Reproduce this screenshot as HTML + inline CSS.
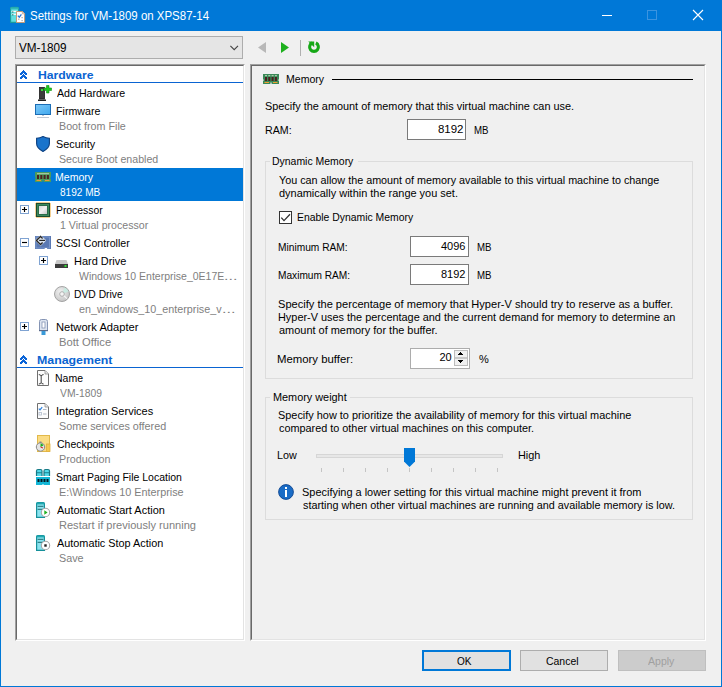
<!DOCTYPE html>
<html><head><meta charset="utf-8"><title>Settings for VM-1809 on XPS87-14</title>
<style>
html,body{margin:0;padding:0}
body{width:722px;height:687px;overflow:hidden;position:relative;background:#f0f0f0;font-family:"Liberation Sans",sans-serif;font-size:11px;line-height:13px;color:#000}
.a{position:absolute}
.t{position:absolute;white-space:pre;line-height:13px;font-size:11px;transform-origin:0 0}
svg{position:absolute;overflow:visible}
.sunken{position:absolute;box-sizing:border-box;border-top:1px solid #a0a0a0;border-left:1px solid #a0a0a0;border-right:1px solid #fff;border-bottom:1px solid #fff}
.sunken>.in{position:absolute;left:0;top:0;right:0;bottom:0;border-top:1px solid #696969;border-left:1px solid #696969;border-right:1px solid #e3e3e3;border-bottom:1px solid #e3e3e3}
.tb{position:absolute;box-sizing:border-box;background:#fff;border:1px solid #7a7a7a}
.grp{position:absolute;box-sizing:border-box;border:1px solid #dcdcdc}
.btn{position:absolute;box-sizing:border-box;background:#e1e1e1;border:1px solid #adadad}
.pm{position:absolute;box-sizing:border-box;width:9px;height:9px;border:1px solid #7fa3d2;background:#fff}
</style></head><body>
<!-- window frame -->
<div class="a" style="left:0;top:0;width:722px;height:31px;background:#0078d7"></div>
<div class="a" style="left:0;top:0;width:1px;height:687px;background:#0078d7"></div>
<div class="a" style="left:721px;top:0;width:1px;height:687px;background:#0078d7"></div>
<div class="a" style="left:0;top:686px;width:722px;height:1px;background:#0078d7"></div>
<!-- title icon -->
<svg style="left:10px;top:7px" width="16" height="16" viewBox="0 0 16 16">
 <path d="M0.6 15.4V1.6Q0.6 0.4 2 0.4H7.2Q8.5 0.4 8.5 1.6V15.4z" fill="#5fe0e0" stroke="#1a9c9c" stroke-width="1.1"/>
 <rect x="0.6" y="0.4" width="7.9" height="2" fill="#30b8b8"/>
 <rect x="1.5" y="3.8" width="6" height="1.3" fill="#f4ffff"/>
 <rect x="1.5" y="6.6" width="6" height="1.3" fill="#f4ffff"/>
 <rect x="2.3" y="4.4" width="1" height="1.2" fill="#0a4a4a"/><rect x="2.3" y="7.2" width="1" height="1.2" fill="#0a4a4a"/>
 <path d="M6.5 4.5H12.5L14.6 6.6V15.5H6.5z" fill="#fff" stroke="#c49a78" stroke-width="1"/>
 <path d="M12.3 4.5V6.8H14.6" fill="#e8e0d8" stroke="#c49a78" stroke-width="0.7"/>
 <path d="M7.8 8.6L9.3 10.2L11.4 7.4" fill="none" stroke="#2a78d8" stroke-width="1.3"/>
 <rect x="8" y="11.5" width="1.5" height="1.5" fill="#c8c0b8"/><rect x="11.5" y="10" width="1.2" height="1.2" fill="#a0a0a0"/><rect x="11.5" y="13" width="1.2" height="1.2" fill="#a0a0a0"/>
</svg>
<!-- title buttons -->
<div class="a" style="left:602px;top:15px;width:10px;height:1px;background:#fff"></div>
<div class="a" style="left:647px;top:10px;width:10px;height:10px;box-sizing:border-box;border:1px solid #3c94e0"></div>
<svg style="left:693px;top:10px" width="10" height="10" viewBox="0 0 10 10"><path d="M0 0L10 10M10 0L0 10" stroke="#fff" stroke-width="1.1"/></svg>

<!-- combo -->
<div class="a" style="left:15px;top:36px;width:228px;height:23px;box-sizing:border-box;background:#e5e5e5;border:1px solid #adadad"></div>
<svg style="left:230px;top:45px" width="9" height="6" viewBox="0 0 9 6"><path d="M0.4 0.9L4.2 4.6L8 0.9" fill="none" stroke="#444" stroke-width="1.15"/></svg>

<!-- toolbar -->
<svg style="left:258px;top:42px" width="8" height="11" viewBox="0 0 8 11"><path d="M0 5.5L8 0V11z" fill="#b8b8b8"/></svg>
<svg style="left:281px;top:42px" width="8" height="11" viewBox="0 0 8 11"><path d="M8 5.5L0 0V11z" fill="#1db01d"/></svg>
<div class="a" style="left:300px;top:40px;width:1px;height:16px;background:#b0b0b0"></div>
<svg style="left:308px;top:41px" width="12" height="12" viewBox="0 0 12 12">
 <path d="M4.14 2.01A4.4 4.4 0 1 0 7.86 2.01" fill="none" stroke="#16a816" stroke-width="3.1"/>
 <path d="M0.2 0.4H6.2V6.2z" fill="#16a816"/>
</svg>

<!-- tree panel -->
<div class="sunken" style="left:15px;top:64px;width:230px;height:577px"><div class="in" style="background:#fff"></div></div>
<div class="a" style="left:17px;top:82px;width:226px;height:1px;background:#0a64d2"></div>
<div class="a" style="left:17px;top:367px;width:226px;height:1px;background:#0a64d2"></div>
<div class="a" style="left:17px;top:168px;width:226px;height:33px;background:#0078d7"></div>

<!-- right panel -->
<div class="sunken" style="left:250px;top:64px;width:456px;height:577px"><div class="in"></div></div>
<div class="a" style="left:332px;top:79px;width:361px;height:1px;background:#000"></div>

<!-- RAM textbox -->
<div class="tb" style="left:407px;top:119px;width:59px;height:21px"></div>
<!-- dynamic memory group -->
<div class="grp" style="left:265px;top:161px;width:428px;height:218px"></div>
<div class="a" style="left:270px;top:155px;width:88px;height:12px;background:#f0f0f0"></div>
<!-- checkbox -->
<div class="a" style="left:279px;top:211px;width:13px;height:13px;box-sizing:border-box;border:1px solid #333;background:#fff"></div>
<svg style="left:279px;top:211px" width="13" height="13" viewBox="0 0 13 13"><path d="M2.3 6.6L5 9.6L11 3.3" fill="none" stroke="#333" stroke-width="1.3"/></svg>
<div class="tb" style="left:410px;top:236px;width:59px;height:21px"></div>
<div class="tb" style="left:410px;top:264px;width:59px;height:21px"></div>
<!-- memory buffer numeric -->
<div class="tb" style="left:410px;top:348px;width:60px;height:21px;border-color:#acacac"></div>
<div class="a" style="left:454px;top:350px;width:14px;height:16px;box-sizing:border-box;background:#f0f0f0;border:1px solid #bcbcbc"></div>
<div class="a" style="left:455px;top:357px;width:12px;height:2px;background:#c8c8c8"></div>
<svg style="left:458px;top:352px" width="5" height="3" viewBox="0 0 5 3" shape-rendering="crispEdges"><path d="M2 0h1v1h1v1h1v1h-5v-1h1v-1h1z" fill="#000"/></svg>
<svg style="left:458px;top:360px" width="5" height="3" viewBox="0 0 5 3" shape-rendering="crispEdges"><path d="M0 0h5v1h-1v1h-1v1h-1v-1h-1v-1h-1z" fill="#000"/></svg>

<!-- memory weight group -->
<div class="grp" style="left:265px;top:397px;width:428px;height:123px"></div>
<div class="a" style="left:270px;top:391px;width:80px;height:12px;background:#f0f0f0"></div>
<!-- slider -->
<div class="a" style="left:316px;top:454px;width:187px;height:4px;box-sizing:border-box;background:#e7e7e7;border:1px solid #d6d6d6"></div>
<svg style="left:404px;top:448px" width="11" height="19" viewBox="0 0 11 19"><path d="M0 0H11V13.5L5.5 19L0 13.5z" fill="#0078d7"/></svg>
<svg style="left:0;top:0" width="722" height="687">
 <g fill="#c4c4c4">
  <rect x="321" y="468" width="1" height="4"/><rect x="343" y="468" width="1" height="4"/><rect x="365" y="468" width="1" height="4"/>
  <rect x="387" y="468" width="1" height="4"/><rect x="409" y="468" width="1" height="4"/><rect x="431" y="468" width="1" height="4"/>
  <rect x="453" y="468" width="1" height="4"/><rect x="475" y="468" width="1" height="4"/><rect x="497" y="468" width="1" height="4"/>
 </g>
</svg>
<!-- info icon -->
<svg style="left:278px;top:484px" width="16" height="16" viewBox="0 0 16 16"><circle cx="8" cy="8" r="7.4" fill="#1a6cc6" stroke="#0d4590" stroke-width="0.9"/><rect x="7" y="6" width="2" height="7" fill="#fff"/><rect x="7" y="3" width="2" height="2" fill="#fff"/></svg>

<!-- buttons -->
<div class="btn" style="left:422px;top:650px;width:89px;height:21px;border:2px solid #0078d7"></div>
<div class="btn" style="left:520px;top:650px;width:88px;height:21px"></div>
<div class="btn" style="left:618px;top:650px;width:88px;height:21px;background:#cccccc;border-color:#bfbfbf"></div>
<!-- tree chevrons -->
<svg style="left:20px;top:70px" width="7" height="9" viewBox="0 0 7 9" shape-rendering="crispEdges"><g fill="#0a64d8"><rect x="3" y="0" width="1" height="1"/><rect x="2" y="1" width="1" height="1"/><rect x="3" y="1" width="1" height="1"/><rect x="4" y="1" width="1" height="1"/><rect x="1" y="2" width="1" height="1"/><rect x="2" y="2" width="1" height="1"/><rect x="3" y="2" width="1" height="1"/><rect x="4" y="2" width="1" height="1"/><rect x="5" y="2" width="1" height="1"/><rect x="0" y="3" width="1" height="1"/><rect x="1" y="3" width="1" height="1"/><rect x="2" y="3" width="1" height="1"/><rect x="4" y="3" width="1" height="1"/><rect x="5" y="3" width="1" height="1"/><rect x="6" y="3" width="1" height="1"/><rect x="0" y="4" width="1" height="1"/><rect x="1" y="4" width="1" height="1"/><rect x="3" y="4" width="1" height="1"/><rect x="5" y="4" width="1" height="1"/><rect x="6" y="4" width="1" height="1"/><rect x="2" y="5" width="1" height="1"/><rect x="3" y="5" width="1" height="1"/><rect x="4" y="5" width="1" height="1"/><rect x="1" y="6" width="1" height="1"/><rect x="2" y="6" width="1" height="1"/><rect x="3" y="6" width="1" height="1"/><rect x="4" y="6" width="1" height="1"/><rect x="5" y="6" width="1" height="1"/><rect x="0" y="7" width="1" height="1"/><rect x="1" y="7" width="1" height="1"/><rect x="2" y="7" width="1" height="1"/><rect x="4" y="7" width="1" height="1"/><rect x="5" y="7" width="1" height="1"/><rect x="6" y="7" width="1" height="1"/><rect x="0" y="8" width="1" height="1"/><rect x="1" y="8" width="1" height="1"/><rect x="5" y="8" width="1" height="1"/><rect x="6" y="8" width="1" height="1"/></g></svg>
<svg style="left:20px;top:355px" width="7" height="9" viewBox="0 0 7 9" shape-rendering="crispEdges"><g fill="#0a64d8"><rect x="3" y="0" width="1" height="1"/><rect x="2" y="1" width="1" height="1"/><rect x="3" y="1" width="1" height="1"/><rect x="4" y="1" width="1" height="1"/><rect x="1" y="2" width="1" height="1"/><rect x="2" y="2" width="1" height="1"/><rect x="3" y="2" width="1" height="1"/><rect x="4" y="2" width="1" height="1"/><rect x="5" y="2" width="1" height="1"/><rect x="0" y="3" width="1" height="1"/><rect x="1" y="3" width="1" height="1"/><rect x="2" y="3" width="1" height="1"/><rect x="4" y="3" width="1" height="1"/><rect x="5" y="3" width="1" height="1"/><rect x="6" y="3" width="1" height="1"/><rect x="0" y="4" width="1" height="1"/><rect x="1" y="4" width="1" height="1"/><rect x="3" y="4" width="1" height="1"/><rect x="5" y="4" width="1" height="1"/><rect x="6" y="4" width="1" height="1"/><rect x="2" y="5" width="1" height="1"/><rect x="3" y="5" width="1" height="1"/><rect x="4" y="5" width="1" height="1"/><rect x="1" y="6" width="1" height="1"/><rect x="2" y="6" width="1" height="1"/><rect x="3" y="6" width="1" height="1"/><rect x="4" y="6" width="1" height="1"/><rect x="5" y="6" width="1" height="1"/><rect x="0" y="7" width="1" height="1"/><rect x="1" y="7" width="1" height="1"/><rect x="2" y="7" width="1" height="1"/><rect x="4" y="7" width="1" height="1"/><rect x="5" y="7" width="1" height="1"/><rect x="6" y="7" width="1" height="1"/><rect x="0" y="8" width="1" height="1"/><rect x="1" y="8" width="1" height="1"/><rect x="5" y="8" width="1" height="1"/><rect x="6" y="8" width="1" height="1"/></g></svg>
<!-- add hardware -->
<svg style="left:38px;top:85px" width="14" height="16" viewBox="0 0 14 16">
 <rect x="1.5" y="2.5" width="5" height="11.5" fill="#3c3c3c" stroke="#1a1a1a" stroke-width="0.8"/>
 <rect x="0" y="14.5" width="8" height="1.5" fill="#202020"/>
 <rect x="3" y="4" width="2" height="2" fill="#3adc3a"/>
 <path d="M8.5 0.5h2.5v2.5h2.5v2.5h-2.5v2.5h-2.5v-2.5h-2.5v-2.5h2.5z" fill="#1ec81e" stroke="#12901a" stroke-width="0.6"/>
</svg>
<!-- firmware monitor -->
<svg style="left:35px;top:104px" width="16" height="14" viewBox="0 0 16 14">
 <defs><linearGradient id="gm" x1="0" y1="0" x2="1" y2="1"><stop offset="0" stop-color="#7cc8f8"/><stop offset="1" stop-color="#40a8ee"/></linearGradient></defs>
 <rect x="0.5" y="0.5" width="15" height="10" fill="url(#gm)" stroke="#1b6db5"/>
 <rect x="7" y="11" width="2" height="1" fill="#b8c4d0"/>
 <rect x="2" y="13" width="12" height="1" fill="#c0c8d4"/>
</svg>
<!-- security shield -->
<svg style="left:36px;top:136px" width="14" height="16" viewBox="0 0 14 16">
 <path d="M0.6 2.2Q4 2.2 7 0.6Q10 2.2 13.4 2.2V7.5Q13.4 12 7 15.4Q0.6 12 0.6 7.5Z" fill="#1a74cc" stroke="#0b3f80" stroke-width="1.1"/>
</svg>
<!-- memory (tree, selected) -->
<svg style="left:35px;top:172px" width="16" height="10" viewBox="0 0 16 10">
 <path d="M0 0H16V5.5H15.3V6.8H16V10H8.6V8.6H7.4V10H0V6.8H0.7V5.5H0z" fill="#4c9a5c"/>
 <rect x="2" y="3" width="2" height="4" fill="#4a2020"/><rect x="5.3" y="3" width="2" height="4" fill="#4a2020"/><rect x="8.6" y="3" width="2" height="4" fill="#4a2020"/><rect x="11.9" y="3" width="2" height="4" fill="#4a2020"/>
 <rect x="2" y="1.2" width="12" height="1" fill="#b8d0b0"/>
 <rect x="1.5" y="8" width="4.5" height="1" fill="#e89a30"/><rect x="10" y="8" width="4.5" height="1" fill="#e89a30"/>
</svg>
<!-- memory (header) -->
<svg style="left:263px;top:74px" width="16" height="10" viewBox="0 0 16 10">
 <path d="M0 0H16V5.5H15.3V6.8H16V10H8.6V8.6H7.4V10H0V6.8H0.7V5.5H0z" fill="#3a8a58"/>
 <rect x="2" y="3" width="2" height="4" fill="#4a2020"/><rect x="5.3" y="3" width="2" height="4" fill="#4a2020"/><rect x="8.6" y="3" width="2" height="4" fill="#4a2020"/><rect x="11.9" y="3" width="2" height="4" fill="#4a2020"/>
 <rect x="2" y="1.2" width="2" height="1" fill="#c8dcc0"/><rect x="5.3" y="1.2" width="2" height="1" fill="#c8dcc0"/><rect x="8.6" y="1.2" width="2" height="1" fill="#c8dcc0"/><rect x="11.9" y="1.2" width="2" height="1" fill="#c8dcc0"/>
 <rect x="1.5" y="8" width="4.5" height="1" fill="#f0a030"/><rect x="10" y="8" width="4.5" height="1" fill="#f0a030"/>
</svg>
<!-- processor -->
<svg style="left:35px;top:202px" width="16" height="16" viewBox="0 0 16 16">
 <g fill="#eaa22a"><rect x="1.5" y="0" width="1" height="1"/><rect x="1.5" y="15" width="1" height="1"/><rect x="0" y="1.5" width="1" height="1"/><rect x="15" y="1.5" width="1" height="1"/><rect x="3.5" y="0" width="1" height="1"/><rect x="3.5" y="15" width="1" height="1"/><rect x="0" y="3.5" width="1" height="1"/><rect x="15" y="3.5" width="1" height="1"/><rect x="5.5" y="0" width="1" height="1"/><rect x="5.5" y="15" width="1" height="1"/><rect x="0" y="5.5" width="1" height="1"/><rect x="15" y="5.5" width="1" height="1"/><rect x="7.5" y="0" width="1" height="1"/><rect x="7.5" y="15" width="1" height="1"/><rect x="0" y="7.5" width="1" height="1"/><rect x="15" y="7.5" width="1" height="1"/><rect x="9.5" y="0" width="1" height="1"/><rect x="9.5" y="15" width="1" height="1"/><rect x="0" y="9.5" width="1" height="1"/><rect x="15" y="9.5" width="1" height="1"/><rect x="11.5" y="0" width="1" height="1"/><rect x="11.5" y="15" width="1" height="1"/><rect x="0" y="11.5" width="1" height="1"/><rect x="15" y="11.5" width="1" height="1"/><rect x="13.5" y="0" width="1" height="1"/><rect x="13.5" y="15" width="1" height="1"/><rect x="0" y="13.5" width="1" height="1"/><rect x="15" y="13.5" width="1" height="1"/></g>
 <rect x="1" y="1" width="14" height="14" fill="#2c6c4a"/>
 <rect x="1.5" y="1.5" width="13" height="13" fill="none" stroke="#1c4a30" stroke-width="1"/>
 <rect x="2.5" y="2.5" width="11" height="11" fill="none" stroke="#3c8a5c" stroke-width="1"/>
 <defs><linearGradient id="gp" x1="0" y1="0" x2="1" y2="1"><stop offset="0" stop-color="#d8d8d8"/><stop offset="0.5" stop-color="#f0f0f0"/><stop offset="1" stop-color="#c8c8c8"/></linearGradient></defs>
 <rect x="4" y="4" width="8" height="8" fill="url(#gp)"/>
</svg>
<div class="pm" style="left:20px;top:205px"></div>
<svg style="left:20px;top:205px" width="9" height="9" viewBox="0 0 9 9"><path d="M2 4.5H7M4.5 2V7" stroke="#000" stroke-width="1.15"/></svg>
<!-- scsi -->
<svg style="left:35px;top:236px" width="16" height="13" viewBox="0 0 16 13">
 <rect x="0" y="0" width="16" height="13" fill="#5a79b3"/>
 <rect x="1" y="1" width="13.5" height="11" fill="none" stroke="#7d9acd" stroke-width="0.9"/>
 <rect x="9.7" y="12" width="2.4" height="1" fill="#fff"/>
 <path d="M5.6 -0.4L10.9 4.4L5.6 9.6L0.3 4.4z" fill="#dde5ef" stroke="#eef2f8" stroke-width="0.8"/>
 <path d="M7.6 2.4L5.5 0.4L1.4 4.4L5.5 8.5L7.6 6.4" fill="none" stroke="#262626" stroke-width="1.35"/>
 <path d="M4.2 4.4H10.2" stroke="#262626" stroke-width="1.2"/>
</svg>
<div class="pm" style="left:20px;top:238px"></div>
<svg style="left:20px;top:238px" width="9" height="9" viewBox="0 0 9 9"><path d="M2 4.5H7" stroke="#000" stroke-width="1.15"/></svg>
<!-- hdd -->
<div class="pm" style="left:39px;top:256px"></div>
<svg style="left:39px;top:256px" width="9" height="9" viewBox="0 0 9 9"><path d="M2 4.5H7M4.5 2V7" stroke="#000" stroke-width="1.15"/></svg>
<svg style="left:55px;top:260px" width="13" height="8" viewBox="0 0 13 8">
 <path d="M1.5 0H11.5L13 4H0z" fill="#c8c8c8"/>
 <rect x="0" y="4" width="13" height="4" fill="#3c3c3c"/>
 <rect x="9.5" y="5" width="2" height="2" fill="#30e030"/>
</svg>
<!-- dvd -->
<svg style="left:54px;top:286px" width="16" height="16" viewBox="0 0 16 16">
 <defs><radialGradient id="gd" cx="0.4" cy="0.35" r="0.75"><stop offset="0" stop-color="#f0f0f0"/><stop offset="1" stop-color="#c0c0c0"/></radialGradient></defs>
 <circle cx="8" cy="8" r="7.5" fill="url(#gd)" stroke="#9c9c9c" stroke-width="0.9"/>
 <path d="M8 8L10.6 1.4A7 7 0 0 1 14.6 5.6z" fill="#c4eee2" opacity="0.8"/>
 <path d="M8 8L13 12.6" stroke="#f6f6f6" stroke-width="1.2"/>
 <circle cx="8" cy="8" r="2.3" fill="#f4f4f4" stroke="#a8a8a8" stroke-width="0.9"/>
</svg>
<!-- network adapter -->
<div class="pm" style="left:20px;top:322px"></div>
<svg style="left:20px;top:322px" width="9" height="9" viewBox="0 0 9 9"><path d="M2 4.5H7M4.5 2V7" stroke="#000" stroke-width="1.15"/></svg>
<svg style="left:39px;top:319px" width="9" height="16" viewBox="0 0 9 16">
 <path d="M0.5 2.5Q0.5 0.5 2.5 0.5H6.5Q8.5 0.5 8.5 2.5V11.5H0.5z" fill="#dde4f0" stroke="#8494b4"/>
 <rect x="3" y="3" width="3" height="6" fill="#fff" stroke="#8494b4" stroke-width="0.8"/>
 <rect x="0" y="11" width="9" height="1.2" fill="#5a6a8a"/>
 <rect x="2.5" y="12" width="4" height="4" fill="#3a9ad8"/>
</svg>
<!-- name doc -->
<svg style="left:37px;top:370px" width="12" height="16" viewBox="0 0 12 16">
 <path d="M0.5 0.5H8L11.5 4V15.5H0.5z" fill="#fdfdfd" stroke="#707070"/>
 <path d="M8 0.5V4H11.5" fill="#e8e8e8" stroke="#909090" stroke-width="0.8"/>
 <path d="M1.8 4.6Q4 4.6 4.2 6.2V12.4Q4 14 1.8 14M6.6 4.6Q4.4 4.6 4.2 6.2M4.2 12.4Q4.4 14 6.6 14" stroke="#404040" stroke-width="1" fill="none"/>
</svg>
<!-- integration doc -->
<svg style="left:37px;top:403px" width="12" height="16" viewBox="0 0 12 16">
 <path d="M0.5 0.5H8L11.5 4V15.5H0.5z" fill="#fdfdfd" stroke="#707070"/>
 <path d="M8 0.5V4H11.5" fill="#e8e8e8" stroke="#909090" stroke-width="0.8"/>
 <path d="M1.8 5.6L3 6.9L5.2 4.2" stroke="#2a80e0" stroke-width="1.2" fill="none"/>
 <rect x="6" y="6" width="3.5" height="1" fill="#b0b8c4"/>
 <rect x="2" y="9.5" width="2.5" height="2.5" fill="none" stroke="#b0bccc" stroke-width="0.8"/>
 <rect x="6" y="10.5" width="3.5" height="1" fill="#b0b8c4"/>
</svg>
<!-- checkpoints -->
<svg style="left:36px;top:435px" width="15" height="17" viewBox="0 0 15 17">
 <rect x="1.5" y="0.5" width="12" height="16" fill="#fbdc84" stroke="#e2b94a"/>
 <rect x="10.5" y="9" width="3.5" height="7.5" fill="#f6c850" stroke="#e0b040" stroke-width="0.8"/>
 <circle cx="4.5" cy="12" r="4.2" fill="#e4e4e4" stroke="#8a8a8a" stroke-width="1"/>
 <rect x="3.5" y="6.5" width="2" height="1.5" fill="#8a8a8a"/>
 <path d="M4.5 12L4.5 8.5A3.5 3.5 0 0 1 7.5 10.5z" fill="#20b020"/>
 <path d="M4.5 12L7 13" stroke="#d02020" stroke-width="1"/>
</svg>
<!-- smart paging -->
<svg style="left:35px;top:469px" width="16" height="16" viewBox="0 0 16 16">
 <path d="M1.5 7V2Q1.5 0.5 3 0.5H5.5Q7 0.5 7 2V7" fill="#50d8e8" stroke="#167a86" stroke-width="1.2"/>
 <path d="M9 7V2Q9 0.5 10.5 0.5H13Q14.5 0.5 14.5 2V7" fill="#50d8e8" stroke="#167a86" stroke-width="1.2"/>
 <rect x="1.5" y="3.3" width="5.5" height="0.9" fill="#167a86"/><rect x="9" y="3.3" width="5.5" height="0.9" fill="#167a86"/>
 <path d="M1 8H15V16H8.5V15H7.5V16H1z" fill="#12b6d6"/>
 <rect x="2.5" y="10" width="2" height="3" fill="#061a22"/><rect x="5.5" y="10" width="2" height="3" fill="#061a22"/><rect x="8.5" y="10" width="2" height="3" fill="#061a22"/><rect x="11.5" y="10" width="2" height="3" fill="#061a22"/>
</svg>
<!-- auto start -->
<svg style="left:36px;top:502px" width="14" height="16" viewBox="0 0 14 16">
 <path d="M0.6 15.4V1.8Q0.6 0.6 1.8 0.6H7.2Q8.4 0.6 8.4 1.8V15.4z" fill="#8ae4f0" stroke="#16909a" stroke-width="1.2"/>
 <rect x="0.6" y="0.6" width="7.8" height="1.8" fill="#20a8b0"/>
 <rect x="1.6" y="3.8" width="5.8" height="1" fill="#1e6a70"/><rect x="1.6" y="6.8" width="5.8" height="1" fill="#1e6a70"/>
 <circle cx="9.5" cy="10.5" r="4.2" fill="#fff" stroke="#a8a8a8" stroke-width="1.1"/>
 <path d="M8.3 8.3L11.6 10.5L8.3 12.7z" fill="#20b020"/>
</svg>
<!-- auto stop -->
<svg style="left:36px;top:535px" width="14" height="16" viewBox="0 0 14 16">
 <path d="M0.6 15.4V1.8Q0.6 0.6 1.8 0.6H7.2Q8.4 0.6 8.4 1.8V15.4z" fill="#8ae4f0" stroke="#16909a" stroke-width="1.2"/>
 <rect x="0.6" y="0.6" width="7.8" height="1.8" fill="#20a8b0"/>
 <rect x="1.6" y="3.8" width="5.8" height="1" fill="#1e6a70"/><rect x="1.6" y="6.8" width="5.8" height="1" fill="#1e6a70"/>
 <circle cx="9.5" cy="10.5" r="4.2" fill="#fff" stroke="#a8a8a8" stroke-width="1.1"/>
 <rect x="8.3" y="9.3" width="2.4" height="2.4" fill="#202020"/>
</svg>
<div class="t" style="left:37.84px;top:69px;font-size:11.5px;font-weight:bold;color:#0a64d2;transform:scaleX(1.0608)">Hardware</div>
<div class="t" style="left:57.00px;top:87px;color:#000;transform:scaleX(0.9686)">Add Hardware</div>
<div class="t" style="left:55.53px;top:105px;color:#000;transform:scaleX(0.9689)">Firmware</div>
<div class="t" style="left:58.73px;top:120px;color:#808080;transform:scaleX(0.9746)">Boot from File</div>
<div class="t" style="left:56.02px;top:138px;color:#000;transform:scaleX(0.9846)">Security</div>
<div class="t" style="left:58.73px;top:153px;color:#808080;transform:scaleX(0.9663)">Secure Boot enabled</div>
<div class="t" style="left:55.44px;top:171px;color:#fff;transform:scaleX(0.9590)">Memory</div>
<div class="t" style="left:59.80px;top:186px;color:#fff;transform:scaleX(0.9136)">8192 MB</div>
<div class="t" style="left:56.06px;top:204px;color:#000;transform:scaleX(0.9417)">Processor</div>
<div class="t" style="left:59.54px;top:219px;color:#808080;transform:scaleX(0.9644)">1 Virtual processor</div>
<div class="t" style="left:55.73px;top:237px;color:#000;transform:scaleX(0.9653)">SCSI Controller</div>
<div class="t" style="left:74.30px;top:255px;color:#000;transform:scaleX(0.9961)">Hard Drive</div>
<div class="t" style="left:78.80px;top:270px;color:#808080;transform:scaleX(0.9539)">Windows 10 Enterprise_0E17E</div>
<div class="t" style="left:223.74px;top:270px;color:#808080;transform:scaleX(1.4571)">...</div>
<div class="t" style="left:74.36px;top:288px;color:#000;transform:scaleX(0.9373)">DVD Drive</div>
<div class="t" style="left:78.80px;top:303px;color:#808080;transform:scaleX(0.9795)">en_windows_10_enterprise_v</div>
<div class="t" style="left:221.73px;top:303px;color:#808080;transform:scaleX(1.4714)">...</div>
<div class="t" style="left:55.69px;top:321px;color:#000;transform:scaleX(1.0138)">Network Adapter</div>
<div class="t" style="left:58.98px;top:336px;color:#808080;transform:scaleX(1.0200)">Bott Office</div>
<div class="t" style="left:37.33px;top:354px;font-size:11.5px;font-weight:bold;color:#0a64d2;transform:scaleX(1.0739)">Management</div>
<div class="t" style="left:55.45px;top:372px;color:#000;transform:scaleX(0.9536)">Name</div>
<div class="t" style="left:60.00px;top:387px;color:#808080;transform:scaleX(0.9409)">VM-1809</div>
<div class="t" style="left:56.00px;top:405px;color:#000;transform:scaleX(1.0000)">Integration Services</div>
<div class="t" style="left:59.02px;top:420px;color:#808080;transform:scaleX(0.9815)">Some services offered</div>
<div class="t" style="left:57.00px;top:438px;color:#000;transform:scaleX(0.9517)">Checkpoints</div>
<div class="t" style="left:59.02px;top:453px;color:#808080;transform:scaleX(0.9784)">Production</div>
<div class="t" style="left:55.55px;top:471px;color:#000;transform:scaleX(0.9534)">Smart Paging File Location</div>
<div class="t" style="left:59.02px;top:486px;color:#808080;transform:scaleX(0.9848)">E:\Windows 10 Enterprise</div>
<div class="t" style="left:56.80px;top:504px;color:#000;transform:scaleX(0.9963)">Automatic Start Action</div>
<div class="t" style="left:59.00px;top:519px;color:#808080;transform:scaleX(1.0044)">Restart if previously running</div>
<div class="t" style="left:56.80px;top:537px;color:#000;transform:scaleX(0.9869)">Automatic Stop Action</div>
<div class="t" style="left:58.52px;top:552px;color:#808080;transform:scaleX(0.9792)">Save</div>
<div class="t" style="left:285.84px;top:73px;color:#000;transform:scaleX(0.9590)">Memory</div>
<div class="t" style="left:264.51px;top:100px;color:#000;transform:scaleX(0.9891)">Specify the amount of memory that this virtual machine can use.</div>
<div class="t" style="left:264.53px;top:124px;color:#000;transform:scaleX(0.9692)">RAM:</div>
<div class="t" style="left:438.00px;top:123px;color:#000;transform:scaleX(1.0417)">8192</div>
<div class="t" style="left:473.92px;top:124px;color:#000;transform:scaleX(0.8800)">MB</div>
<div class="t" style="left:272.25px;top:155px;color:#000;transform:scaleX(0.9506)">Dynamic Memory</div>
<div class="t" style="left:278.60px;top:174px;color:#000;transform:scaleX(0.9804)">You can allow the amount of memory available to this virtual machine to change</div>
<div class="t" style="left:278.60px;top:187px;color:#000;transform:scaleX(0.9955)">dynamically within the range you set.</div>
<div class="t" style="left:296.75px;top:211px;color:#000;transform:scaleX(0.9451)">Enable Dynamic Memory</div>
<div class="t" style="left:277.97px;top:241px;color:#000;transform:scaleX(0.9260)">Minimum RAM:</div>
<div class="t" style="left:441.00px;top:240px;color:#000;transform:scaleX(1.0000)">4096</div>
<div class="t" style="left:476.72px;top:241px;color:#000;transform:scaleX(0.8800)">MB</div>
<div class="t" style="left:277.98px;top:269px;color:#000;transform:scaleX(0.9208)">Maximum RAM:</div>
<div class="t" style="left:441.00px;top:268px;color:#000;transform:scaleX(1.0000)">8192</div>
<div class="t" style="left:476.72px;top:269px;color:#000;transform:scaleX(0.8800)">MB</div>
<div class="t" style="left:277.89px;top:298px;color:#000;transform:scaleX(1.0069)">Specify the percentage of memory that Hyper-V should try to reserve as a buffer.</div>
<div class="t" style="left:277.91px;top:311px;color:#000;transform:scaleX(0.9905)">Hyper-V uses the percentage and the current demand for memory to determine an</div>
<div class="t" style="left:278.90px;top:324px;color:#000;transform:scaleX(0.9950)">amount of memory for the buffer.</div>
<div class="t" style="left:277.47px;top:353px;color:#000;transform:scaleX(1.0333)">Memory buffer:</div>
<div class="t" style="left:439.50px;top:351px;color:#000;transform:scaleX(1.0000)">20</div>
<div class="t" style="left:479.00px;top:353px;color:#000;letter-spacing:0.000px">%</div>
<div class="t" style="left:272.51px;top:391px;color:#000;transform:scaleX(0.9878)">Memory weight</div>
<div class="t" style="left:277.91px;top:409px;color:#000;transform:scaleX(0.9913)">Specify how to prioritize the availability of memory for this virtual machine</div>
<div class="t" style="left:278.90px;top:422px;color:#000;transform:scaleX(0.9860)">compared to other virtual machines on this computer.</div>
<div class="t" style="left:277.42px;top:449px;color:#000;transform:scaleX(0.9789)">Low</div>
<div class="t" style="left:518.21px;top:449px;color:#000;transform:scaleX(0.9905)">High</div>
<div class="t" style="left:301.61px;top:486px;color:#000;transform:scaleX(0.9950)">Specifying a lower setting for this virtual machine might prevent it from</div>
<div class="t" style="left:302.60px;top:499px;color:#000;transform:scaleX(0.9828)">starting when other virtual machines are running and available memory is low.</div>
<div class="t" style="left:457.20px;top:655px;color:#000;transform:scaleX(0.9125)">OK</div>
<div class="t" style="left:546.10px;top:655px;color:#000;transform:scaleX(0.9500)">Cancel</div>
<div class="t" style="left:647.60px;top:655px;color:#a0a0a0;transform:scaleX(0.9571)">Apply</div>
<div class="t" style="left:30.04px;top:10px;font-size:12px;color:#fff;transform:scaleX(0.9554)">Settings for VM-1809 on XPS87-14</div>
<div class="t" style="left:19.20px;top:42px;font-size:12px;color:#000;transform:scaleX(0.9750)">VM-1809</div>
</body></html>
